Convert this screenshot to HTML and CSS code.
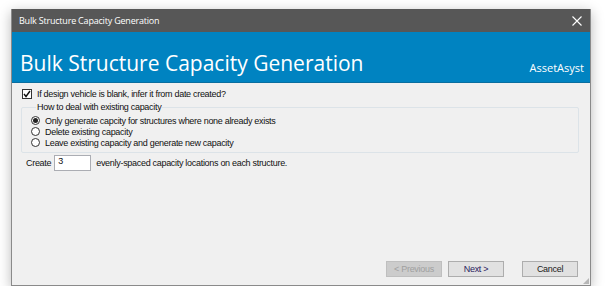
FILE: index.html
```html
<!DOCTYPE html>
<html lang="en">
<head>
  <meta charset="UTF-8" />
  <title>Bulk Structure Capacity Generation</title>
  <link rel="stylesheet" href="styles.css">
</head>
<body>

  <div class="window">
    <div class="titlebar">
      <span class="title">Bulk Structure Capacity Generation</span>
      <svg class="close" width="10" height="10" viewBox="0 0 10 10">
        <path d="M0.5 0.5 L9.5 9.5 M9.5 0.5 L0.5 9.5" stroke="#fff" stroke-width="1.1" fill="none" />
      </svg>
    </div>

    <div class="banner">
      <h1>Bulk Structure Capacity Generation</h1>
      <span class="brand">AssetAsyst</span>
    </div>

    <div class="content">
      <label class="check-row">
        <span class="checkbox">
          <svg width="8" height="8" viewBox="0 0 8 8">
            <path d="M1 4 L3 6.5 L7 1" stroke="#111" stroke-width="1.4" fill="none" />
          </svg>
        </span>
        If design vehicle is blank, infer it from date created?
      </label>

      <fieldset class="group">
        <legend>How to deal with existing capacity</legend>
        <label class="radio-row"><span class="radio checked"></span>Only generate capcity for structures where none already exists</label>
        <label class="radio-row"><span class="radio"></span>Delete existing capacity</label>
        <label class="radio-row"><span class="radio"></span>Leave existing capacity and generate new capacity</label>
      </fieldset>

      <div class="create-row">
        <span>Create</span>
        <div class="textbox">3</div>
        <span>evenly-spaced capacity locations on each structure.</span>
      </div>

      <div class="buttons">
        <button class="btn" disabled>&lt; Previous</button>
        <button class="btn next">Next &gt;</button>
        <button class="btn cancel">Cancel</button>
      </div>
      <div class="grip"></div>
    </div>
  </div>

</body>
</html>
```

FILE: styles.css
```css
/* Base reset */
* {
  margin: 0; padding: 0; box-sizing: border-box;
}
body {
  background: #fff;
  font-family: 'Liberation Sans', Arial, sans-serif;
  font-size: 9px;
  letter-spacing: -0.3px;
  color: #111;
}

/* Dialog window */
.window {
  margin: 9px 0 0 11px;
  width: 580px;
  height: 277px;
  border: 1px solid #8a8a8a;
  border-top: none;
  box-shadow: 0 3px 12px rgba(0, 0, 0, 0.28);
  display: flex;
  flex-direction: column;
  background: #f0f0f0;
}

.titlebar {
  height: 23px;
  background: #575757;
  color: #fff;
  display: flex;
  align-items: center;
  padding: 0 8px 0 7px;
  font-family: 'Open Sans', 'Noto Sans', sans-serif;
  font-size: 9px;
  letter-spacing: -0.2px;
}
.titlebar .title {
  flex-grow: 1;
}

.banner {
  height: 51px;
  background: #0083c1;
  border-bottom: 1px solid #0a6e9f;
  color: #fff;
  display: flex;
  align-items: flex-end;
  justify-content: space-between;
  padding: 0 6px 6px 8px;
  font-family: 'Open Sans', 'Noto Sans', sans-serif;
  letter-spacing: 0;
}
.banner h1 {
  font-weight: normal;
  font-size: 21px;
  line-height: 26px;
}
.banner .brand {
  font-size: 11px;
  line-height: 15px;
  margin-bottom: 1px;
}

.content {
  flex-grow: 1;
  display: flex;
  flex-direction: column;
  padding: 5px 11px 8px 9px;
  position: relative;
}

.check-row {
  display: flex;
  align-items: center;
  gap: 5px;
  height: 12px;
  padding-left: 1px;
}
.checkbox {
  width: 10px;
  height: 10px;
  border: 1px solid #333;
  background: #fff;
  display: flex;
  align-items: center;
  justify-content: center;
}

.group {
  margin-top: 2px;
  border: 1px solid #dce3e8;
  border-radius: 2px;
  padding: 3px 0 3px 9px;
  height: 51px;
}
.group legend {
  padding: 0 1px;
  margin-left: 5px;
  line-height: 10px;
}
.radio-row {
  display: flex;
  align-items: center;
  gap: 5px;
  height: 11px;
}
.radio {
  width: 9px;
  height: 9px;
  border: 1px solid #333;
  border-radius: 50%;
  background: #fff;
  display: flex;
  align-items: center;
  justify-content: center;
}
.radio.checked::after {
  content: '';
  width: 5px;
  height: 5px;
  border-radius: 50%;
  background: #222;
}

.create-row {
  display: flex;
  align-items: center;
  margin-top: 2px;
  padding-left: 5px;
}
.textbox {
  width: 37px;
  height: 16px;
  margin: 0 5px 0 3px;
  background: #fff;
  border: 1px solid #abadb3;
  padding: 0 0 0 3px;
  line-height: 10px;
}

.buttons {
  margin-top: auto;
  display: flex;
  justify-content: flex-end;
  gap: 6px;
  padding-right: 1px;
}
.btn {
  width: 56px;
  height: 16px;
  background: #e1e1e1;
  border: 1px solid #adadad;
  font-family: 'Liberation Sans', Arial, sans-serif;
  font-size: 9px;
  letter-spacing: -0.3px;
  color: #1a1a1a;
}
.btn:disabled {
  background: #cccccc;
  border-color: #bfbfbf;
  color: #a0a0a0;
}
.btn.next {
  color: #2a1a5e;
}
.btn.cancel {
  margin-left: 12px;
}

/* Resize grip dots */
.grip {
  position: absolute;
  right: 1px;
  bottom: 1px;
  width: 6px;
  height: 6px;
  background:
    radial-gradient(circle, #b5b5b5 0.7px, transparent 1px) 0 0 / 2px 2px;
  clip-path: polygon(100% 0, 100% 100%, 0 100%);
}
```
